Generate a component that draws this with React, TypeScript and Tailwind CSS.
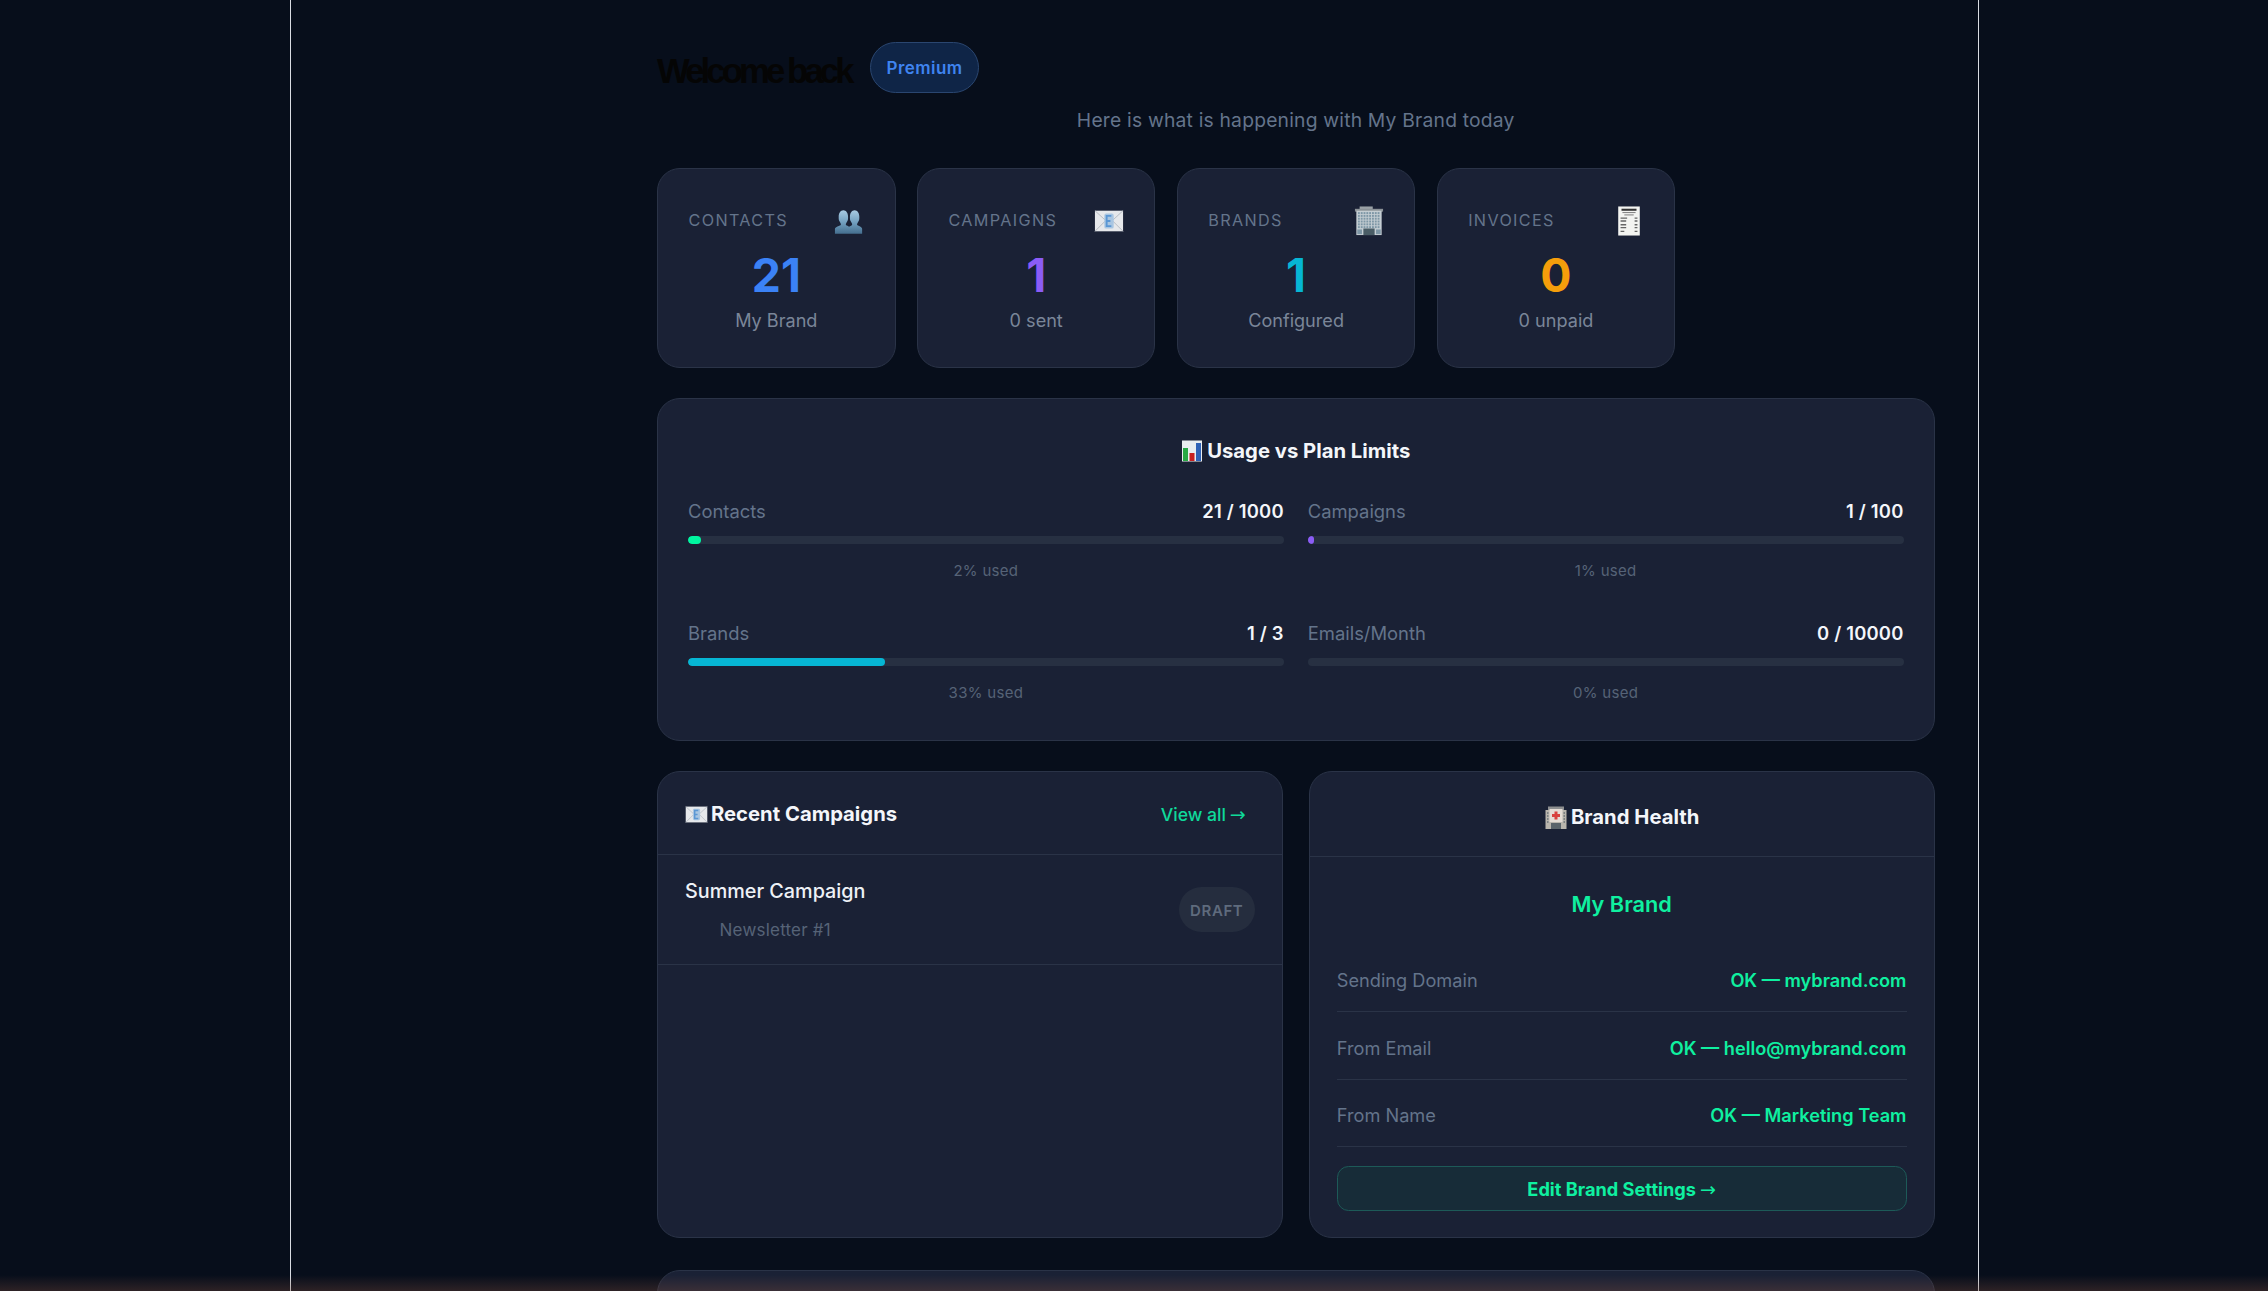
import React from "react";

const GREEN = "text-[#0ff0a0]";
const ARROW = "font-['DejaVu_Sans',sans-serif] font-normal text-[19px] leading-none";

function Busts({ s = 32 }: { s?: number }) {
  return (
    <svg width={s} height={s} viewBox="0 0 32 32">
      <defs>
        <linearGradient id="bust" x1="0" y1="0" x2="0" y2="1">
          <stop offset="0" stopColor="#a9cbe2" />
          <stop offset="0.55" stopColor="#6f9dbd" />
          <stop offset="1" stopColor="#456f8f" />
        </linearGradient>
      </defs>
      <path d="M1 30v-5c0-2 4-3 6-4 1-1 0-2-1-4-1-1-1-3-1-5 0-4 2-7 5-7s5 3 5 7c0 2 0 4-1 5-1 2-2 3-1 4 2 1 3 1 3 2v7z" fill="url(#bust)" />
      <path d="M16 30v-7c0-1 2-1 3-2 1-1 0-2-1-4-1-1-1-3-1-5 0-4 2-7 5-7s5 3 5 7c0 2 0 4-1 5-1 2-2 3-1 4 2 1 5 2 5 4v5z" fill="url(#bust)" />
    </svg>
  );
}

function Envelope({ s = 32 }: { s?: number }) {
  return (
    <svg width={s} height={s} viewBox="0 0 32 32">
      <rect x="1" y="5" width="30" height="22" fill="#e6e8eb" />
      <path d="M1 5l12 11M31 5L19 16M1 27l11-11M31 27L20 16" fill="none" stroke="#b4bac1" strokeWidth="1" />
      <rect x="11" y="8" width="10" height="16" rx="2" fill="#a9c6e2" />
      <path d="M18.500 10.500h-5v11h5M13.500 16h4" stroke="#5b97d4" strokeWidth="2" fill="none" />
    </svg>
  );
}

function Building({ s = 32 }: { s?: number }) {
  const cells: React.ReactElement[] = [];
  for (let r = 0; r < 6; r++) {
    for (let c = 0; c < 8; c++) {
      cells.push(<rect key={`${r}-${c}`} x={4.2 + c * 3} y={6.500 + r * 3} width="2" height="2.100" fill="#7e97a6" />);
    }
  }
  return (
    <svg width={s} height={s} viewBox="0 0 32 32">
      <rect x="6" y="0.500" width="14" height="3" fill="#9aa1a6" />
      <rect x="1" y="3" width="30" height="3" fill="#8b9297" />
      <rect x="2.500" y="5" width="27" height="26" fill="#c5ced3" />
      {cells}
      <rect x="10" y="24" width="12" height="7" fill="#4a5d66" />
      <rect x="3.500" y="25" width="5" height="5" fill="#7e97a6" />
      <rect x="23.500" y="25" width="5" height="5" fill="#7e97a6" />
    </svg>
  );
}

function Receipt({ s = 32 }: { s?: number }) {
  return (
    <svg width={s} height={s} viewBox="0 0 32 32">
      <rect x="4.500" y="0.500" width="23" height="31" fill="#f3f4f1" />
      <path d="M8 4h16" stroke="#333" strokeWidth="2.200" />
      <path d="M9 7h14M11 9.500h10" stroke="#777" strokeWidth="1" />
      <path d="M7 13h7M22 13h3M7 16h6M22 16h3M7 20h6M22 20h3M7 23h6M22 23h3M7 27h4M22 27h3" stroke="#666" strokeWidth="1.400" />
    </svg>
  );
}

function Chart({ s = 22 }: { s?: number }) {
  return (
    <svg width={s} height={s} viewBox="0 0 22 22">
      <rect x="1" y="0.500" width="20" height="21" fill="#e9edf0" />
      <rect x="2" y="8" width="5" height="13" fill="#27a844" />
      <rect x="8.500" y="13" width="5" height="8" fill="#c8201f" />
      <rect x="15" y="3" width="5" height="18" fill="#2f62b6" />
    </svg>
  );
}

function Hospital({ s = 24 }: { s?: number }) {
  return (
    <svg width={s} height={s} viewBox="0 0 24 24">
      <rect x="4" y="0.500" width="16" height="4" fill="#8d8f90" />
      <rect x="1.500" y="4" width="21" height="19" fill="#b9b5ad" />
      <rect x="5.500" y="3" width="13" height="13" fill="#e4dcd5" />
      <path d="M12 5.500v8M8 9.500h8" stroke="#d8413e" strokeWidth="3" />
      <rect x="7" y="17" width="10" height="6" fill="#59636a" />
      <path d="M3 7h1.500M3 10h1.500M3 13h1.500M3 16h1.500M19.500 7H21M19.500 10H21M19.500 13H21M19.500 16H21" stroke="#6a7277" strokeWidth="1.500" />
    </svg>
  );
}

const stats = [
  { label: "CONTACTS", value: "21", sub: "My Brand", color: "text-[#3b82f6]", icon: <Busts s={33} /> },
  { label: "CAMPAIGNS", value: "1", sub: "0 sent", color: "text-[#8b5cf6]", icon: <Envelope /> },
  { label: "BRANDS", value: "1", sub: "Configured", color: "text-[#06b6d4]", icon: <Building /> },
  { label: "INVOICES", value: "0", sub: "0 unpaid", color: "text-[#f59e0b]", icon: <Receipt /> },
];

const usage = [
  { label: "Contacts", value: "21 / 1000", used: "2% used", pct: 2.1, color: "bg-[#00f5a0]" },
  { label: "Campaigns", value: "1 / 100", used: "1% used", pct: 1, color: "bg-[#8b5cf6]" },
  { label: "Brands", value: "1 / 3", used: "33% used", pct: 33, color: "bg-[#06b6d4]" },
  { label: "Emails/Month", value: "0 / 10000", used: "0% used", pct: 0, color: "bg-[#8b5cf6]" },
];

const health = [
  { label: "Sending Domain", value: "OK — mybrand.com" },
  { label: "From Email", value: "OK — hello@mybrand.com" },
  { label: "From Name", value: "OK — Marketing Team" },
];

const card = "bg-[#1a2135] border border-[#2a3347] rounded-[23px]";

export default function App() {
  return (
    <div className="relative h-[1291px] w-[2268px] overflow-hidden bg-[#070e1b] font-['Inter','Liberation_Sans',sans-serif]">
      <div className="flex h-full">
        <div className="w-[290px] shrink-0" />
        <main className="w-[1689px] shrink-0 border-x-[1.5px] border-[#d9dde3] pl-[366px] pr-[43.5px] pt-[42px]">
          <div className="flex h-[51px] items-center gap-[16px]">
            <h1 className="mt-[8px] w-[197px] font-['Liberation_Sans',sans-serif] text-[34.7px] font-bold leading-none tracking-[-3.9px] text-[#050505]">
              Welcome back
            </h1>
            <span className="flex h-[51px] w-[109px] items-center justify-center rounded-full border border-[#2a4670] bg-[#0f2547] pt-[2px] text-[17px] font-semibold tracking-[0.45px] text-[#3f84f0]">
              Premium
            </span>
          </div>
          <p className="mt-[12px] text-center text-[19.3px] leading-[30px] tracking-[0.2px] text-[#64748b]">
            Here is what is happening with My Brand today
          </p>

          <div className="mt-[33px] flex gap-[21.3px]">
            {stats.map((s) => (
              <div key={s.label} className={`${card} h-[200px] w-[238.6px] px-[30.5px] pt-[31px]`}>
                <div className="flex h-[41px] items-center justify-between">
                  <span className="text-[16.2px] tracking-[1.35px] text-[#64748b]">{s.label}</span>
                  <span className="flex h-[30px] w-[30px] items-center justify-center">{s.icon}</span>
                </div>
                <div className={`mt-[11px] text-center text-[46.3px] font-bold leading-[46px] ${s.color}`}>{s.value}</div>
                <div className="mt-[8.5px] text-center text-[18.1px] leading-[26px] text-[#7a8699]">{s.sub}</div>
              </div>
            ))}
          </div>

          <section className={`${card} mt-[30px] h-[343px] px-[30px] pt-[31px]`}>
            <h2 className="flex h-[42px] items-center justify-center gap-[4px] text-[20.25px] font-bold text-[#f4f6fa]">
              <Chart />
              <span>Usage vs Plan Limits</span>
            </h2>
            <div className="mt-[26px] grid grid-cols-2 gap-x-[24px] gap-y-[38px]">
              {usage.map((u) => (
                <div key={u.label}>
                  <div className="flex h-[28px] items-center justify-between text-[18.4px]">
                    <span className="text-[#64748b]">{u.label}</span>
                    <span className="font-semibold tracking-[0.2px] text-[#f4f6fa]">{u.value}</span>
                  </div>
                  <div className="mt-[10px] h-[8px] overflow-hidden rounded-full bg-[#273042]">
                    <div className={`h-full rounded-full ${u.color}`} style={{ width: `${u.pct}%` }} />
                  </div>
                  <div className="mt-[16px] text-center text-[15px] leading-[22px] tracking-[0.3px] text-[#566377]">{u.used}</div>
                </div>
              ))}
            </div>
          </section>

          <div className="mt-[30px] grid grid-cols-2 gap-[26px]">
            <section className={`${card} h-[467px]`}>
              <header className="flex h-[83px] items-center justify-between border-b border-[#2a3347] pl-[27px] pr-[36px] pt-[2px]">
                <h2 className="flex items-center gap-[3px] text-[20.25px] font-bold text-[#f4f6fa]">
                  <Envelope s={23} />
                  <span>Recent Campaigns</span>
                </h2>
                <a className="flex items-center gap-[4px] pt-[2px] text-[17.6px] font-medium text-[#0fd99a]">
                  <span>View all</span>
                  <span className={ARROW}>→</span>
                </a>
              </header>
              <div className="flex h-[110px] items-center justify-between border-b border-[#2a3347] px-[27px]">
                <div className="flex flex-col items-center">
                  <div className="text-[19.8px] font-medium leading-[26px] text-[#eef1f6]">Summer Campaign</div>
                  <div className="mt-[14px] text-[17px] leading-[24px] tracking-[0.2px] text-[#566377]">Newsletter #1</div>
                </div>
                <span className="flex h-[45px] w-[76px] items-center justify-center rounded-full bg-[#252d3e] pt-[3px] text-[15px] font-semibold tracking-[0.6px] text-[#5f6b7d]">
                  DRAFT
                </span>
              </div>
            </section>

            <section className={`${card} h-[467px]`}>
              <header className="flex h-[85px] items-center justify-center gap-[3px] border-b border-[#2a3347] pt-[7px]">
                <Hospital />
                <h2 className="text-[20.25px] font-bold text-[#f4f6fa]">Brand Health</h2>
              </header>
              <div className="px-[27px] pt-[33px]">
                <div className={`text-center text-[21.7px] font-semibold leading-[28px] ${GREEN}`}>My Brand</div>
                <div className="mt-[26.5px]">
                  {health.map((h) => (
                    <div key={h.label} className="flex h-[67.5px] items-center justify-between border-b border-[#2a3347] pt-[6px] text-[18.2px]">
                      <span className="text-[#64748b]">{h.label}</span>
                      <span className={`font-semibold ${GREEN}`}>{h.value}</span>
                    </div>
                  ))}
                </div>
                <div className={`mt-[18.5px] flex h-[45px] items-center justify-center gap-[4px] rounded-[11.5px] border border-[#1d5a58] bg-[#172c38] pt-[3px] text-[18.2px] font-bold ${GREEN}`}>
                  <span>Edit Brand Settings</span>
                  <span className={ARROW}>→</span>
                </div>
              </div>
            </section>
          </div>

          <section className={`${card} mt-[32px] h-[200px]`} />
        </main>
      </div>
      <div className="pointer-events-none absolute inset-x-0 bottom-0 h-[16px] bg-gradient-to-b from-transparent to-[#7a4a3a55]" />
    </div>
  );
}
